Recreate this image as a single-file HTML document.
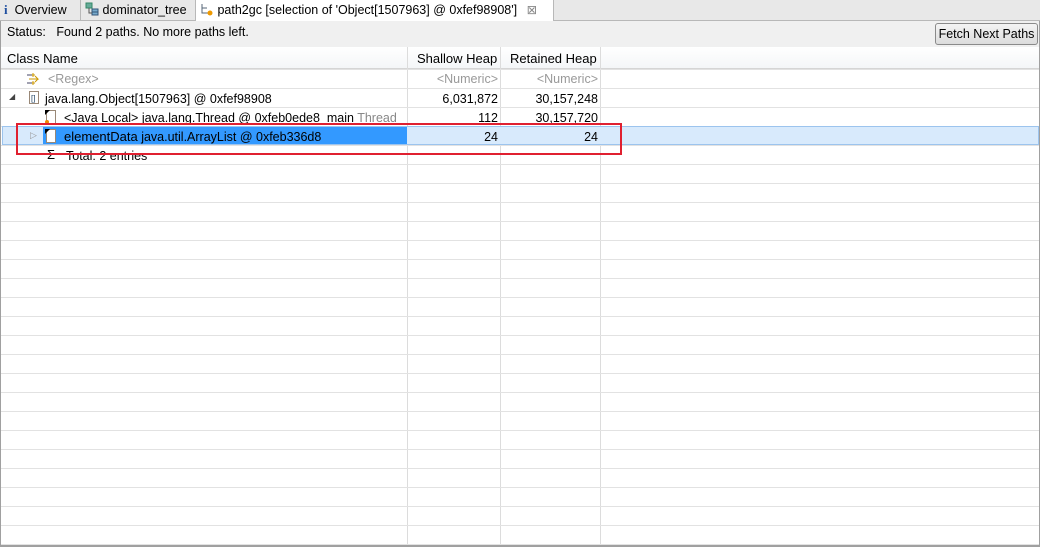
<!DOCTYPE html>
<html><head><meta charset="utf-8"><style>
*{margin:0;padding:0;box-sizing:border-box}
body{width:1040px;height:547px;overflow:hidden;background:#fff;font-family:"Liberation Sans",sans-serif;font-size:12.5px;color:#000;position:relative}
.abs{position:absolute;white-space:nowrap}
.tabbar{position:absolute;left:0;top:0;width:1040px;height:21px;background:#e8e8e8;border-bottom:1px solid #b8b8b8}
.tab{position:absolute;top:0;height:21px;border-right:1px solid #b8b8b8;line-height:20px;padding-left:4px}
.status{position:absolute;left:0;top:21px;width:1040px;height:26px;background:#f0f0f0;border-left:1px solid #a0a0a0;border-right:1px solid #a0a0a0}
.btn{position:absolute;left:935px;top:23px;width:103px;height:22px;border:1px solid #8a8a8a;border-radius:3px;background:linear-gradient(#f4f4f4,#dcdcdc);text-align:center;line-height:20px}
.table{position:absolute;left:0;top:47px;width:1040px;height:500px;border-left:1px solid #a0a0a0;border-right:1px solid #a0a0a0;border-bottom:2px solid #a0a0a0;overflow:hidden}
.hdr{position:absolute;left:0;top:0;width:1040px;height:22px;background:linear-gradient(#fff,#f4f6f8);border-bottom:1px solid #d5d5d5}
.hl{position:absolute;top:0;width:1px;height:500px;background:#dcdcdc}
.rl{position:absolute;left:0;width:1040px;height:1px;background:#e2e2e2}
.num{text-align:right}
</style></head><body>
<div class="tabbar">
 <div class="tab" style="left:0;width:81px"><span style="color:#2050a0;font-weight:bold;font-family:'Liberation Serif',serif;font-size:13px">i</span>&nbsp; Overview</div>
 <div class="tab" style="left:81px;width:115px"><svg width="14" height="14" style="vertical-align:-2px"><rect x="1" y="1" width="6" height="5" fill="#6a9" stroke="#386"/><rect x="7" y="7" width="6" height="3" fill="#7ac" stroke="#357"/><rect x="7" y="10" width="6" height="3" fill="#7ac" stroke="#357"/><path d="M4 6v5h3" stroke="#555" fill="none"/></svg> dominator_tree</div>
 <div class="tab" style="left:196px;width:358px;background:#fff;height:22px"><svg width="14" height="14" style="vertical-align:-2px"><path d="M2 2v9h6M2 6h5" stroke="#567" fill="none"/><circle cx="10" cy="11" r="2.5" fill="#e90"/></svg> path2gc [selection of 'Object[1507963] @ 0xfef98908'] <span style="color:#888;margin-left:6px">⊠</span></div>
</div>
<div class="status"><span class="abs" style="left:6px;top:4px">Status:&nbsp;&nbsp; Found 2 paths. No more paths left.</span></div>
<div class="btn">Fetch Next Paths</div>
<div class="table">
 <div class="hdr"></div>
 <div class="hl" style="left:406px"></div><div class="hl" style="left:499px"></div><div class="hl" style="left:599px"></div>
 <div class="rl" style="top:22px"></div>
 <div class="rl" style="top:41px"></div><div class="rl" style="top:60px"></div><div class="rl" style="top:79px"></div><div class="rl" style="top:98px"></div><div class="rl" style="top:117px"></div><div class="rl" style="top:136px"></div><div class="rl" style="top:155px"></div><div class="rl" style="top:174px"></div><div class="rl" style="top:193px"></div><div class="rl" style="top:212px"></div><div class="rl" style="top:231px"></div><div class="rl" style="top:250px"></div><div class="rl" style="top:269px"></div><div class="rl" style="top:288px"></div><div class="rl" style="top:307px"></div><div class="rl" style="top:326px"></div><div class="rl" style="top:345px"></div><div class="rl" style="top:364px"></div><div class="rl" style="top:383px"></div><div class="rl" style="top:402px"></div><div class="rl" style="top:421px"></div><div class="rl" style="top:440px"></div><div class="rl" style="top:459px"></div><div class="rl" style="top:478px"></div><div class="rl" style="top:497px"></div>
 <span class="abs" style="left:6px;top:4px;font-size:13px">Class Name</span>
 <span class="abs" style="left:416px;top:4px;font-size:13px">Shallow Heap</span>
 <span class="abs" style="left:509px;top:4px;font-size:13px">Retained Heap</span>
 <div class="abs" style="left:1px;top:79px;width:1037px;height:19px;background:#d8eafc;border:1px solid #9cc4ee"></div>
 <div class="abs" style="left:42px;top:80px;width:364px;height:17px;background:#3399ff"></div>
 <svg class="abs" style="left:25px;top:25px" width="16" height="14"><path d="M1 3h8M1 11h8M7 1v4M7 9v4M3 7h9l-3-3M12 7l-3 3" stroke="#c90" fill="none"/><path d="M1 3h5M1 11h5" stroke="#446"/></svg>
 <span class="abs" style="left:47px;top:25px;color:#999">&lt;Regex&gt;</span>
 <span class="abs num" style="left:407px;width:90px;top:25px;color:#999">&lt;Numeric&gt;</span>
 <span class="abs num" style="left:500px;width:97px;top:25px;color:#999">&lt;Numeric&gt;</span>
 <span class="abs" style="left:8px;top:45px;font-size:8px;color:#444">◢</span>
 <svg class="abs" style="left:27px;top:43px" width="12" height="15"><rect x="1.5" y="1.5" width="9" height="12" fill="#fff" stroke="#987"/><text x="3" y="11" font-size="8" fill="#246" font-family="Liberation Sans">[]</text></svg>
 <span class="abs" style="left:44px;top:45px">java.lang.Object[1507963] @ 0xfef98908</span>
 <span class="abs num" style="left:407px;width:90px;top:45px">6,031,872</span>
 <span class="abs num" style="left:500px;width:97px;top:45px">30,157,248</span>
 <svg class="abs" style="left:43px;top:62px" width="14" height="16"><rect x="2.5" y="1.5" width="9" height="13" fill="#fff" stroke="#987"/><path d="M1 1h5L1 6z" fill="#000"/><circle cx="3" cy="13" r="2" fill="#e80"/></svg>
 <span class="abs" style="left:63px;top:64px">&lt;Java Local&gt; java.lang.Thread @ 0xfeb0ede8&nbsp; main <span style="color:#888">Thread</span></span>
 <span class="abs num" style="left:407px;width:90px;top:64px">112</span>
 <span class="abs num" style="left:500px;width:97px;top:64px">30,157,720</span>
 <span class="abs" style="left:29px;top:83px;font-size:9px;color:#999">▷</span>
 <svg class="abs" style="left:43px;top:81px" width="14" height="16"><rect x="2.5" y="1.5" width="9" height="13" fill="#fff" stroke="#987"/><path d="M1 1h5L1 6z" fill="#000"/></svg>
 <span class="abs" style="left:63px;top:82px"><span style="font-size:13px">elementData</span> java.util.ArrayList @ 0xfeb336d8</span>
 <span class="abs num" style="left:407px;width:90px;top:83px">24</span>
 <span class="abs num" style="left:500px;width:97px;top:83px">24</span>
 <span class="abs" style="left:46px;top:100px;font-size:13px">Σ</span>
 <span class="abs" style="left:65px;top:102px">Total: 2 entries</span>
</div>
<div class="abs" style="left:16px;top:123px;width:606px;height:32px;border:2px solid #e02030"></div>
</body></html>
